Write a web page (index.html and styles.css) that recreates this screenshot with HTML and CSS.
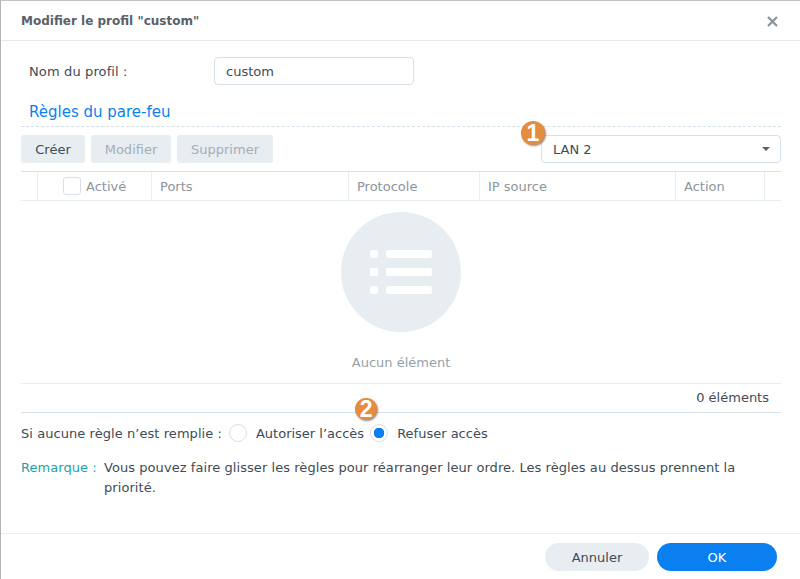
FILE: index.html
```html
<!DOCTYPE html>
<html lang="fr">
<head>
    <meta charset="UTF-8">
    <meta name="viewport" content="width=device-width, initial-scale=1.0">
    <title>Modifier le profil</title>
    <link rel="stylesheet" href="styles.css">
</head>
<body>
    <div class="dialog">
        <div class="dialog-header">
            <h1 class="dialog-title">Modifier le profil "custom"</h1>
            <svg class="close-icon" width="11" height="11" viewBox="0 0 11 11">
                <path d="M1 1L10 10M10 1L1 10" stroke="#8a939c" stroke-width="2.2" fill="none"/>
            </svg>
        </div>

        <div class="dialog-body">
            <div class="name-row">
                <label class="name-label">Nom du profil :</label>
                <div class="text-input">custom</div>
            </div>

            <h2 class="section-title">Règles du pare-feu</h2>

            <div class="toolbar">
                <button class="btn btn-create">Créer</button>
                <button class="btn btn-edit disabled">Modifier</button>
                <button class="btn btn-delete disabled">Supprimer</button>
                <div class="select-wrap">
                    <span class="step-badge step-one">1</span>
                    <div class="select">
                        <span>LAN 2</span>
                        <span class="select-arrow"></span>
                    </div>
                </div>
            </div>

            <div class="table-head">
                <div class="col col-drag"></div>
                <div class="col col-active"><span class="checkbox"></span>Activé</div>
                <div class="col col-ports">Ports</div>
                <div class="col col-proto">Protocole</div>
                <div class="col col-ip">IP source</div>
                <div class="col col-action">Action</div>
                <div class="col col-end"></div>
            </div>

            <div class="table-empty">
                <div class="empty-circle">
                    <svg width="64" height="46" viewBox="0 0 64 46">
                        <rect x="0" y="0" width="8" height="8" rx="2" fill="#fff"/>
                        <rect x="16" y="0" width="46" height="8" rx="2" fill="#fff"/>
                        <rect x="0" y="18" width="8" height="8" rx="2" fill="#fff"/>
                        <rect x="16" y="18" width="46" height="8" rx="2" fill="#fff"/>
                        <rect x="0" y="36" width="8" height="8" rx="2" fill="#fff"/>
                        <rect x="16" y="36" width="46" height="8" rx="2" fill="#fff"/>
                    </svg>
                </div>
                <div class="empty-text">Aucun élément</div>
            </div>

            <div class="table-foot">0 éléments</div>

            <div class="policy-row">
                <span class="policy-label">Si aucune règle n’est remplie :</span>
                <span class="radio"></span>
                <span class="radio-label">Autoriser l’accès</span>
                <span class="radio-wrap">
                    <span class="step-badge step-two">2</span>
                    <span class="radio checked"></span>
                </span>
                <span class="radio-label">Refuser accès</span>
            </div>

            <div class="note">
                <span class="note-label">Remarque :</span>
                <span class="note-text">Vous pouvez faire glisser les règles pour réarranger leur ordre. Les règles au dessus prennent la priorité.</span>
            </div>
        </div>

        <div class="dialog-footer">
            <button class="pill">Annuler</button>
            <button class="pill primary">OK</button>
        </div>
    </div>
</body>
</html>
```

FILE: styles.css
```css
html, body {
    margin: 0;
    height: 100%;
    background-color: #ffffff;
}

body {
    font-family: "DejaVu Sans", Verdana, sans-serif;
    font-size: 13px;
    color: #414b55;
    overflow: hidden;
}

.dialog {
    display: flex;
    flex-direction: column;
    height: 100vh;
    box-sizing: border-box;
    border-top: 1px solid #c4c4c4;
    border-left: 1px solid #b4b4b4;
}

.dialog-header {
    display: flex;
    justify-content: space-between;
    align-items: center;
    height: 39px;
    box-sizing: content-box;
    padding: 0 22px 0 20px;
    border-bottom: 1px solid #e3e8ee;
    flex-shrink: 0;
}

.dialog-title {
    margin: 0;
    padding-top: 1px;
    font-size: 12px;
    font-weight: bold;
    color: #5a6169;
}

.close-icon {
    margin-top: 1px;
}

.dialog-body {
    flex: 1;
    padding: 16px 19px 0 20px;
}

.name-row {
    display: flex;
    align-items: center;
    height: 28px;
}

.name-label {
    width: 185px;
    padding-left: 8px;
    box-sizing: border-box;
    margin-right: 8px;
    letter-spacing: 0.13px;
}

.text-input {
    width: 200px;
    height: 28px;
    box-sizing: border-box;
    padding: 0 11px;
    line-height: 28px;
    border: 1px solid #d7dfe8;
    border-radius: 4px;
}

.section-title {
    margin: 17px 0 0;
    height: 24px;
    padding-left: 8px;
    font-size: 15px;
    font-weight: normal;
    line-height: 20px;
    color: #0a7ff0;
    border-bottom: 1px dashed #d5dfe8;
}

.toolbar {
    display: flex;
    align-items: center;
    gap: 6px;
    margin-top: 8px;
}

.btn {
    height: 28px;
    padding: 0;
    border: none;
    border-radius: 3px;
    background-color: #e8edf2;
    color: #414b55;
    font: inherit;
}

.btn-create { width: 64px; }
.btn-edit { width: 80px; }
.btn-delete { width: 96px; }

.btn.disabled {
    color: #a5adb5;
}

.select-wrap {
    position: relative;
    margin-left: auto;
}

.select {
    display: flex;
    justify-content: space-between;
    align-items: center;
    width: 240px;
    height: 28px;
    box-sizing: border-box;
    padding: 0 10px 0 11px;
    border: 1px solid #d7dfe8;
    border-radius: 4px;
}

.select-arrow {
    width: 0;
    height: 0;
    border-left: 4px solid transparent;
    border-right: 4px solid transparent;
    border-top: 4px solid #5a6169;
}

.step-badge {
    position: absolute;
    width: 24px;
    height: 24px;
    border-radius: 50%;
    background-color: #e68c3f;
    color: #ffffff;
    font-family: "Liberation Sans", sans-serif;
    font-size: 23px;
    font-weight: bold;
    line-height: 24px;
    text-align: center;
    box-shadow: 1px 1px 2px rgba(0,0,0,0.45);
}

.step-one {
    left: -20px;
    top: -14px;
}

.step-two {
    left: -15px;
    top: -26px;
    width: 22px;
    height: 22px;
    line-height: 22px;
}

.table-head {
    display: flex;
    height: 28px;
    margin-top: 8px;
    border-top: 1px solid #d7dfe8;
    border-bottom: 1px solid #e8edf2;
    color: #8c949c;
}

.col {
    display: flex;
    align-items: center;
    box-sizing: border-box;
    padding-left: 8px;
    border-right: 1px solid #e8edf2;
}

.col-drag { width: 17px; padding: 0; }
.col-active { width: 114px; padding-left: 25px; }
.col-ports { width: 197px; }
.col-proto { width: 131px; }
.col-ip { width: 196px; }
.col-action { width: 89px; }
.col-end { flex: 1; border-right: none; }

.checkbox {
    width: 18px;
    height: 18px;
    box-sizing: border-box;
    margin-right: 5px;
    border: 1px solid #d7dfe8;
    border-radius: 3px;
}

.table-empty {
    display: flex;
    flex-direction: column;
    align-items: center;
    height: 183px;
    box-sizing: border-box;
    padding-top: 11px;
    border-bottom: 1px solid #e8edf2;
}

.empty-circle {
    display: flex;
    align-items: center;
    justify-content: center;
    width: 120px;
    height: 120px;
    border-radius: 50%;
    background-color: #e8edf2;
}

.empty-circle svg {
    margin-left: 2px;
    margin-top: 2px;
}

.empty-text {
    margin-top: 23px;
    color: #97a0a8;
}

.table-foot {
    height: 28px;
    line-height: 28px;
    padding-right: 12px;
    text-align: right;
    border-bottom: 1px solid #d7dfe8;
}

.policy-row {
    display: flex;
    align-items: center;
    height: 18px;
    margin-top: 11px;
}

.policy-label {
    letter-spacing: 0.06px;
}

.radio {
    width: 18px;
    height: 18px;
    box-sizing: border-box;
    margin-left: 7px;
    border: 1px solid #d7dfe8;
    border-radius: 50%;
    background-color: #ffffff;
}

.radio.checked {
    display: block;
    margin-left: 0;
    background: radial-gradient(circle, #0a7ff0 0 5px, #ffffff 5.5px);
}

.radio-label {
    margin-left: 9px;
}

.radio-wrap {
    position: relative;
    margin-left: 6px;
}

.note {
    display: flex;
    margin-top: 16px;
    line-height: 20px;
    letter-spacing: 0.06px;
}

.note-label {
    flex-shrink: 0;
    width: 83px;
    color: #1aa3a8;
}

.note-text {
    width: 660px;
}

.dialog-footer {
    display: flex;
    justify-content: flex-end;
    gap: 8px;
    flex-shrink: 0;
    height: 46px;
    box-sizing: border-box;
    padding: 9px 23px 0 0;
    border-top: 1px solid #e8edf2;
}

.pill {
    width: 104px;
    height: 28px;
    border: none;
    border-radius: 14px;
    background-color: #e8edf2;
    color: #414b55;
    font: inherit;
}

.pill.primary {
    width: 120px;
    background-color: #0a7ff0;
    color: #ffffff;
}
```
